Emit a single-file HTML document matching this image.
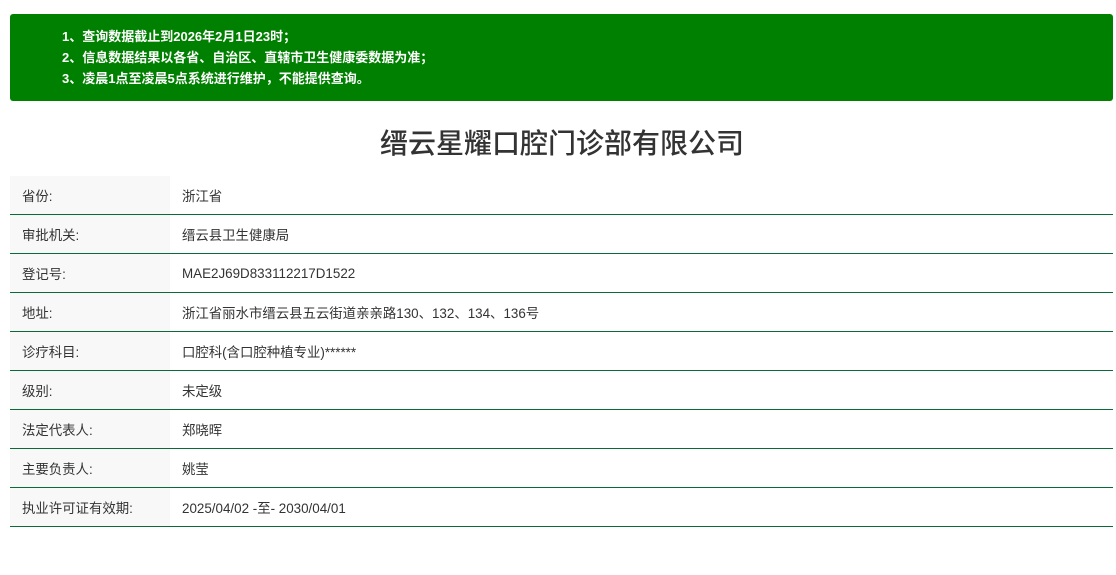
<!DOCTYPE html>
<html><head><meta charset="utf-8"><style>
body{margin:0;background:#fff;font-family:"Liberation Sans","Noto Sans CJK SC",sans-serif;color:#333;width:1116px;height:575px;overflow:hidden}
.box{position:absolute;left:10px;top:14px;width:1103px;height:87px;background:#008000;border-radius:3px;color:#fff;font-size:13px;font-weight:bold}
.box div{position:absolute;left:52px;height:21px;line-height:21px}
h1{position:absolute;top:124px;left:0;width:1124px;margin:0;text-align:center;font-size:28px;font-weight:500;color:#333;line-height:40px}
table{position:absolute;left:10px;top:176px;width:1103px;border-collapse:collapse;font-size:13.4px}
td{height:38px;border-bottom:1px solid #0a6b3a;padding:0;vertical-align:middle}
td.l{width:148px;padding-left:12px;background:#f8f8f8}
td.v{padding-left:12px}
</style></head><body>
<div class="box">
<div style="top:12px">1、查询数据截止到2026年2月1日23时；</div>
<div style="top:33px">2、信息数据结果以各省、自治区、直辖市卫生健康委数据为准；</div>
<div style="top:54px">3、凌晨1点至凌晨5点系统进行维护，不能提供查询。</div>
</div>
<h1>缙云星耀口腔门诊部有限公司</h1>
<table>
<tr><td class="l">省份:</td><td class="v">浙江省</td></tr>
<tr><td class="l">审批机关:</td><td class="v">缙云县卫生健康局</td></tr>
<tr><td class="l">登记号:</td><td class="v">MAE2J69D833112217D1522</td></tr>
<tr><td class="l">地址:</td><td class="v">浙江省丽水市缙云县五云街道亲亲路130、132、134、136号</td></tr>
<tr><td class="l">诊疗科目:</td><td class="v">口腔科(含口腔种植专业)******</td></tr>
<tr><td class="l">级别:</td><td class="v">未定级</td></tr>
<tr><td class="l">法定代表人:</td><td class="v">郑晓晖</td></tr>
<tr><td class="l">主要负责人:</td><td class="v">姚莹</td></tr>
<tr><td class="l">执业许可证有效期:</td><td class="v">2025/04/02 -至- 2030/04/01</td></tr>
</table>
</body></html>
